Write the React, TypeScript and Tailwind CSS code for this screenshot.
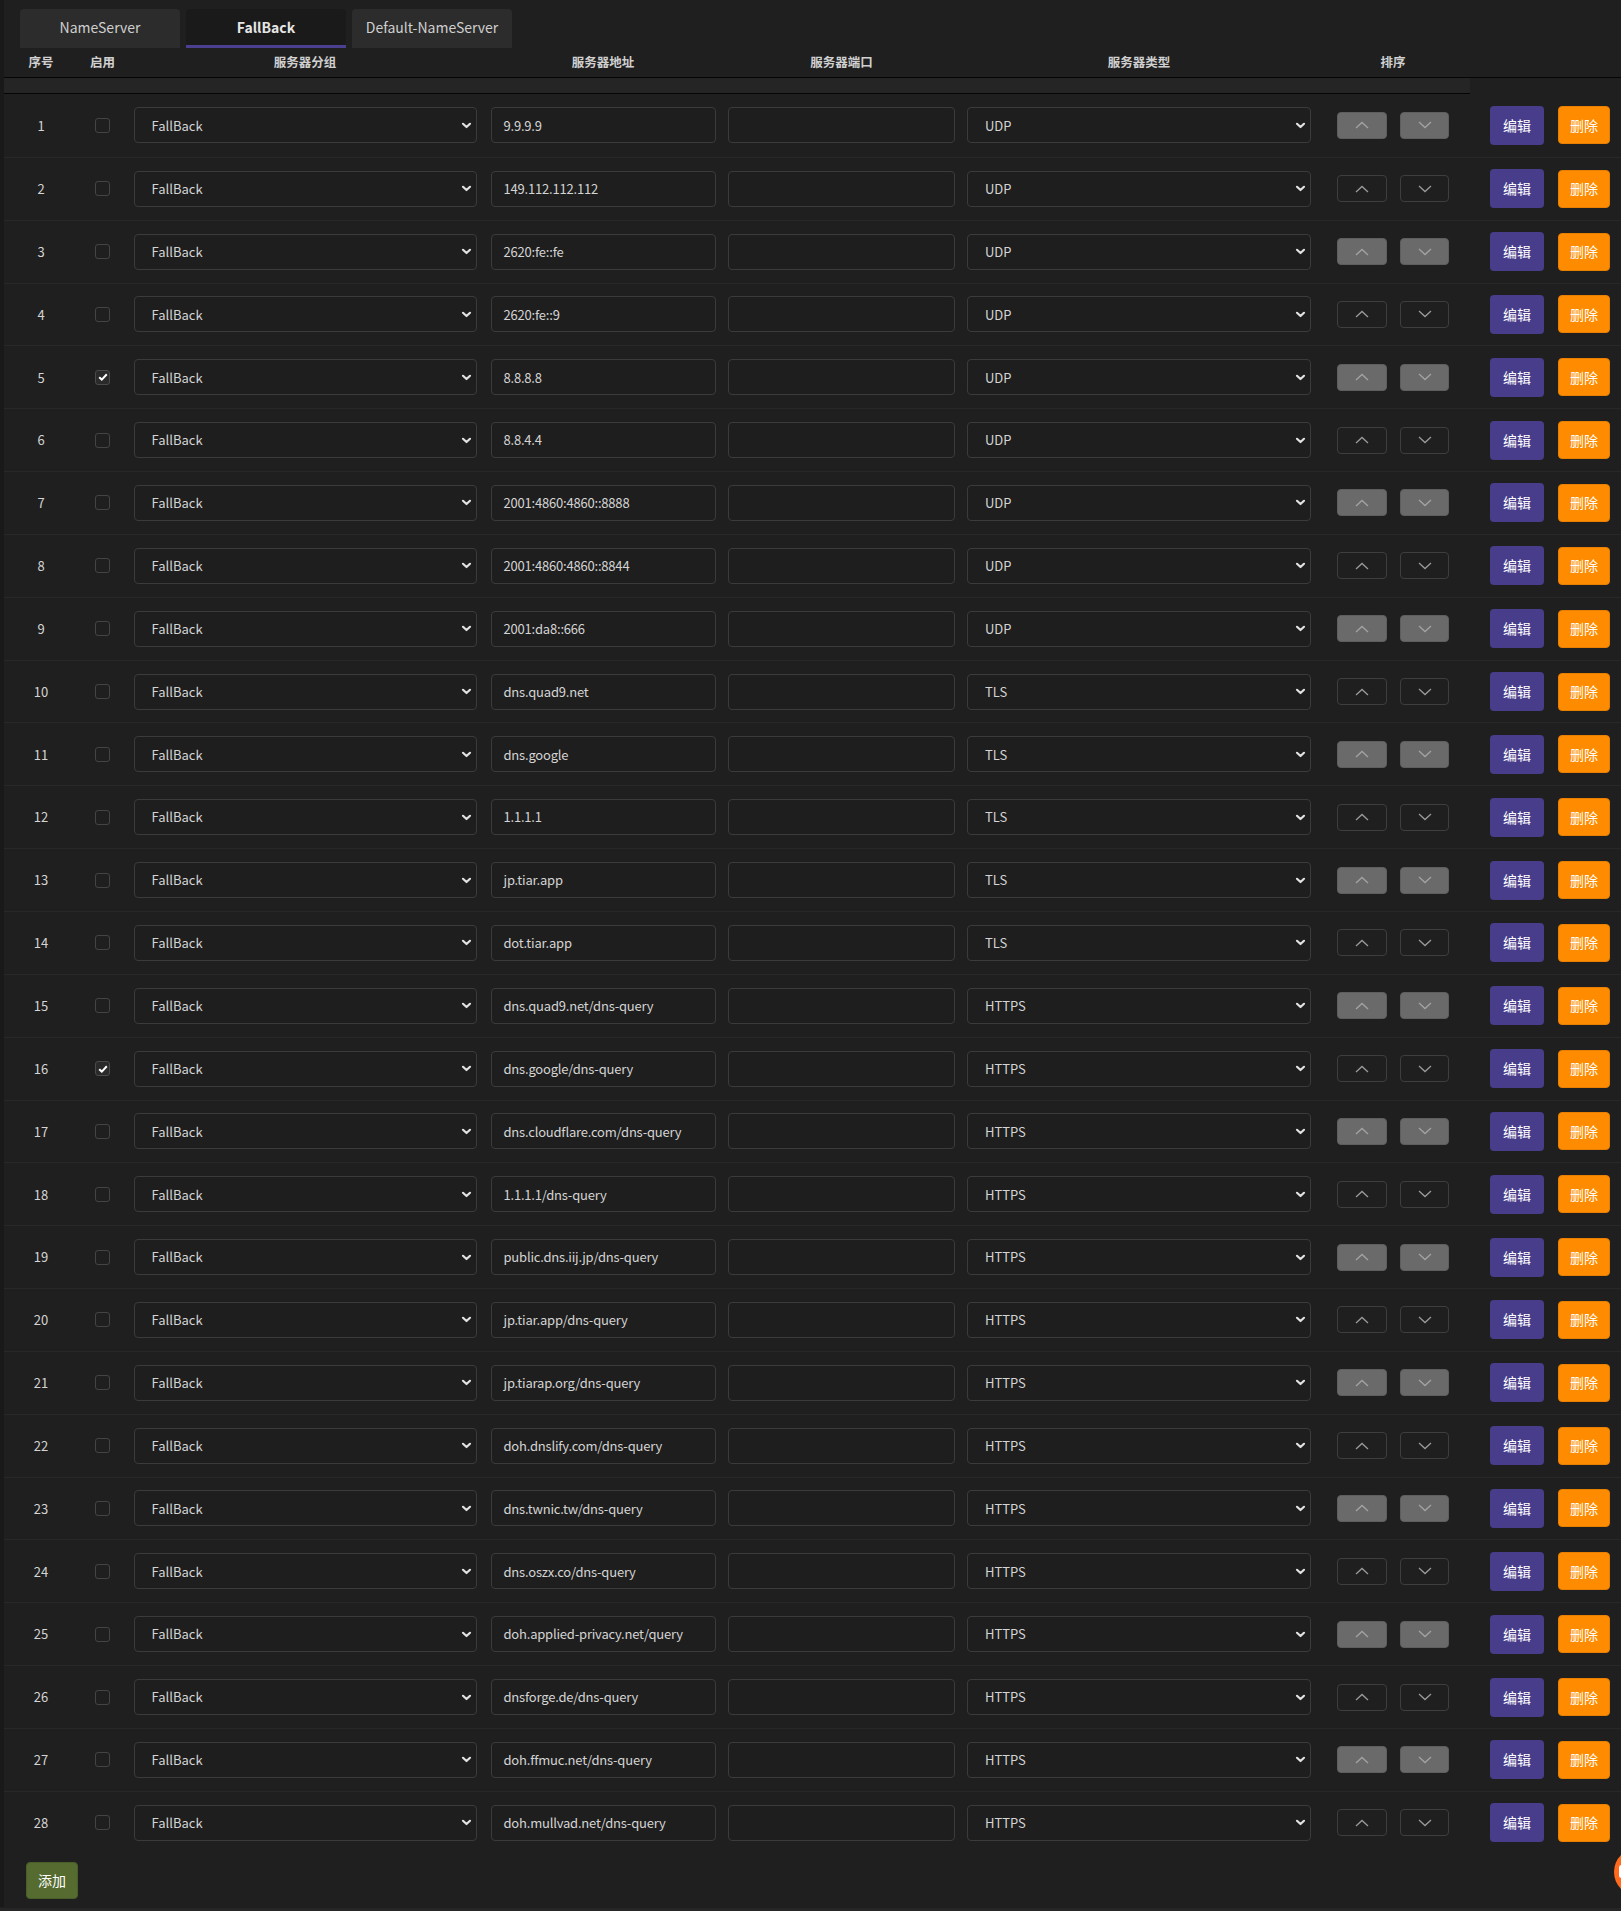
import React from 'react';

interface Server {
  addr: string;
  type: string;
  enabled?: boolean;
}

const servers: Server[] = [
  { addr: '9.9.9.9', type: 'UDP' },
  { addr: '149.112.112.112', type: 'UDP' },
  { addr: '2620:fe::fe', type: 'UDP' },
  { addr: '2620:fe::9', type: 'UDP' },
  { addr: '8.8.8.8', type: 'UDP', enabled: true },
  { addr: '8.8.4.4', type: 'UDP' },
  { addr: '2001:4860:4860::8888', type: 'UDP' },
  { addr: '2001:4860:4860::8844', type: 'UDP' },
  { addr: '2001:da8::666', type: 'UDP' },
  { addr: 'dns.quad9.net', type: 'TLS' },
  { addr: 'dns.google', type: 'TLS' },
  { addr: '1.1.1.1', type: 'TLS' },
  { addr: 'jp.tiar.app', type: 'TLS' },
  { addr: 'dot.tiar.app', type: 'TLS' },
  { addr: 'dns.quad9.net/dns-query', type: 'HTTPS' },
  { addr: 'dns.google/dns-query', type: 'HTTPS', enabled: true },
  { addr: 'dns.cloudflare.com/dns-query', type: 'HTTPS' },
  { addr: '1.1.1.1/dns-query', type: 'HTTPS' },
  { addr: 'public.dns.iij.jp/dns-query', type: 'HTTPS' },
  { addr: 'jp.tiar.app/dns-query', type: 'HTTPS' },
  { addr: 'jp.tiarap.org/dns-query', type: 'HTTPS' },
  { addr: 'doh.dnslify.com/dns-query', type: 'HTTPS' },
  { addr: 'dns.twnic.tw/dns-query', type: 'HTTPS' },
  { addr: 'dns.oszx.co/dns-query', type: 'HTTPS' },
  { addr: 'doh.applied-privacy.net/query', type: 'HTTPS' },
  { addr: 'dnsforge.de/dns-query', type: 'HTTPS' },
  { addr: 'doh.ffmuc.net/dns-query', type: 'HTTPS' },
  { addr: 'doh.mullvad.net/dns-query', type: 'HTTPS' },
];

const cols = 'grid grid-cols-[74px_49px_356px_240px_237px_358px_150px_1fr]';

const SelectArrow = () => (
  <svg width="11" height="7" viewBox="0 0 11 7" className="shrink-0">
    <path d="M2 1.8 L5.5 5 L9 1.8" fill="none" stroke="#e2e2e2" strokeWidth="2.2" strokeLinecap="round" strokeLinejoin="round" />
  </svg>
);

const Chevron = ({ up, color }: { up?: boolean; color: string }) => (
  <svg width="14" height="8" viewBox="0 0 14 8">
    <path d={up ? 'M1 7 L7 1.5 L13 7' : 'M1 1 L7 6.5 L13 1'} fill="none" stroke={color} strokeWidth="1.3" />
  </svg>
);

const FakeSelect = ({ value, width }: { value: string; width: string }) => (
  <div className={`${width} h-[36px] flex items-center justify-between rounded-[4px] border border-[#3b3b3b] bg-[#1e1e1e] pl-[17px] pr-[4px] text-[13px] text-[#d4d4d4]`}>
    <span>{value}</span>
    <SelectArrow />
  </div>
);

const Row = ({ s, i }: { s: Server; i: number }) => {
  const filled = i % 2 === 0;
  const sortBtn = filled
    ? 'bg-[#6a6a6a] border-[#5e5e5e]'
    : 'bg-transparent border-[#3e3e3e]';
  const chevColor = filled ? '#a3a3a3' : '#9a9a9a';

  return (
    <div className={`${cols} h-[62.85px] items-center ${i > 0 ? 'border-t border-[#282828]' : ''}`}>
      <div className="text-center text-[13px] text-[#d4d4d4]">{i + 1}</div>
      <div className="flex justify-center">
        {s.enabled ? (
          <div className="flex h-[15px] w-[15px] items-center justify-center rounded-[3px] border border-[#4a4a4a] bg-[#2a2a2a]">
            <svg width="10" height="8" viewBox="0 0 10 8">
              <path d="M1.2 4.2 L3.8 6.6 L8.8 1.2" fill="none" stroke="#ffffff" strokeWidth="2" />
            </svg>
          </div>
        ) : (
          <div className="h-[15px] w-[15px] rounded-[3px] border border-[#444444]" />
        )}
      </div>
      <div className="flex justify-center">
        <FakeSelect value="FallBack" width="w-[343px]" />
      </div>
      <div className="flex justify-center">
        <div className="flex h-[36px] w-[225px] items-center rounded-[4px] border border-[#3b3b3b] bg-[#1e1e1e] pl-[12px] text-[13px] tracking-[-0.2px] text-[#d4d4d4]">
          {s.addr}
        </div>
      </div>
      <div className="flex justify-center">
        <div className="h-[36px] w-[227px] rounded-[4px] border border-[#3b3b3b] bg-[#1e1e1e]" />
      </div>
      <div className="flex justify-center">
        <FakeSelect value={s.type} width="w-[344px]" />
      </div>
      <div className="flex justify-center gap-[13px]">
        <button className={`flex h-[27px] w-[50px] items-center justify-center rounded-[4px] border ${sortBtn}`}>
          <Chevron up color={chevColor} />
        </button>
        <button className={`flex h-[27px] w-[49px] items-center justify-center rounded-[4px] border ${sortBtn}`}>
          <Chevron color={chevColor} />
        </button>
      </div>
      <div className="flex items-center gap-[14px] pl-[22px]">
        <button className="h-[39px] w-[54px] rounded-[4px] bg-[#483d8b] text-[14px] text-white">编辑</button>
        <button className="h-[38px] w-[52px] rounded-[4px] border border-[#e78000] bg-[#ff8c00] text-[14px] text-white">删除</button>
      </div>
    </div>
  );
};

export default function App() {
  return (
    <div className="relative min-h-[1911px] w-[1621px] overflow-hidden bg-[#1f1f1f] font-['Noto_Sans_CJK_SC',sans-serif] text-[#d2d2d2]">
      <div className="border-l-4 border-[#191919] pb-[8px]">
        {/* Tabs */}
        <div className="flex gap-[6px] pl-[16px] pt-[9px]">
          <div className="flex h-[39px] w-[160px] items-center justify-center rounded-t-[4px] bg-[#2c2c2c] pb-[2px] text-[14px] text-[#cfcfcf]">
            NameServer
          </div>
          <div className="flex h-[39px] w-[160px] items-center justify-center rounded-t-[4px] border-b-[3px] border-[#4b3f8f] bg-[#1a1a1a] text-[14px] font-bold text-[#e6e6e6]">
            FallBack
          </div>
          <div className="flex h-[39px] w-[160px] items-center justify-center rounded-t-[4px] bg-[#2c2c2c] pb-[2px] text-[14px] text-[#cfcfcf]">
            Default-NameServer
          </div>
        </div>

        {/* Header */}
        <div className={`${cols} h-[29px] items-center pb-[1px] text-[12.5px] font-bold text-[#d0d0d0]`}>
          <div className="text-center">序号</div>
          <div className="text-center">启用</div>
          <div className="text-center">服务器分组</div>
          <div className="text-center">服务器地址</div>
          <div className="text-center">服务器端口</div>
          <div className="text-center">服务器类型</div>
          <div className="text-center">排序</div>
          <div />
        </div>
        <div className="border-t border-[#050505]">
          <div className="h-[16px] w-[1466px] border-b border-[#050505] bg-[#252525]" />
        </div>

        {/* Rows */}
        {servers.map((s, i) => (
          <Row key={i} s={s} i={i} />
        ))}

        <button className="ml-[22px] mt-[8px] h-[37px] w-[52px] rounded-[4px] border border-[#4a5e29] bg-[#556b2f] text-[14px] text-white">
          添加
        </button>
      </div>

      {/* floating button, partly off screen */}
      <div className="absolute left-[1614px] top-[1848px] h-[48px] w-[48px] rounded-full bg-[#ff6a1c]">
        <div className="absolute left-[5px] top-[17px] h-[13px] w-[5px] rounded-full bg-white" />
      </div>
      <div className="absolute bottom-0 left-0 h-[3px] w-full bg-[#262626]" />
    </div>
  );
}
